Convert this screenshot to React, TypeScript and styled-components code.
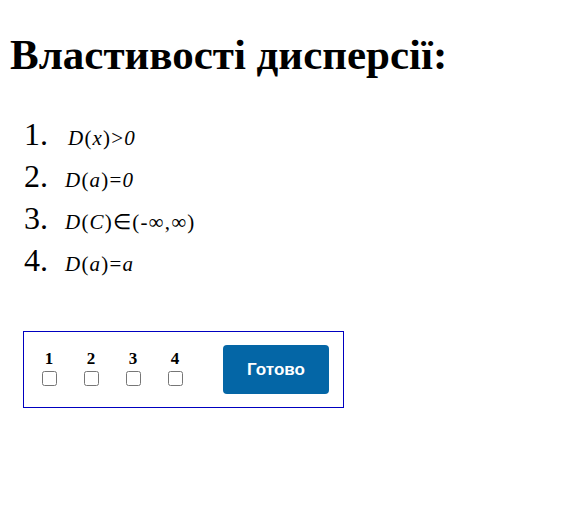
import React from "react";
import styled, { createGlobalStyle } from "styled-components";

const Global = createGlobalStyle`
  html, body { margin: 0; padding: 0; background: #fff; }
  body { font-family: "Liberation Serif", "Times New Roman", serif; color: #000; }
`;

const Page = styled.div`
  padding: 8px 0 0 10px;
`;

const Title = styled.h1`
  margin: 24px 0 0 0;
  font-size: 43px;
  font-weight: bold;
  line-height: 46px;
`;

const List = styled.ol`
  margin: 38px 0 0 0;
  padding: 0 0 0 14px;
  list-style: none;
  display: flex;
  flex-direction: column;
`;

const Item = styled.li`
  display: flex;
  align-items: baseline;
  height: 42px;
`;

const Num = styled.span`
  font-size: 32px;
  width: 41px;
`;

const Formula = styled.span<{ $shift?: number }>`
  font-size: 21px;
  letter-spacing: 1.2px;
  padding-left: ${(p) => p.$shift ?? 0}px;
`;

const I = styled.i`
  font-style: italic;
`;

const Box = styled.div`
  margin: 47px 0 0 13px;
  width: 321px;
  height: 77px;
  box-sizing: border-box;
  border: 1px solid #0000c0;
  display: flex;
  align-items: center;
  padding: 0 0 0 4px;
`;

const Choices = styled.div`
  display: flex;
  padding-bottom: 4px;
`;

const Choice = styled.label`
  width: 42px;
  display: flex;
  flex-direction: column;
  align-items: center;
  font-weight: bold;
  font-size: 17px;
  line-height: 18px;
  gap: 3px;
`;

const Check = styled.input`
  margin: 0;
  width: 15px;
  height: 15px;
`;

const Button = styled.button`
  margin-left: 27px;
  width: 106px;
  height: 49px;
  border: none;
  border-radius: 4px;
  background: #0466a6;
  color: #fff;
  font-family: "Liberation Sans", Arial, sans-serif;
  font-weight: bold;
  font-size: 17px;
`;

export default function App() {
  return (
    <>
      <Global />
      <Page>
        <Title>Властивості дисперсії:</Title>
        <List>
          <Item>
            <Num>1.</Num>
            <Formula $shift={3}>
              <I>D</I>(<I>x</I>)&gt;<I>0</I>
            </Formula>
          </Item>
          <Item>
            <Num>2.</Num>
            <Formula>
              <I>D</I>(<I>a</I>)=<I>0</I>
            </Formula>
          </Item>
          <Item>
            <Num>3.</Num>
            <Formula>
              <I>D</I>(<I>C</I>)∈(-∞,∞)
            </Formula>
          </Item>
          <Item>
            <Num>4.</Num>
            <Formula>
              <I>D</I>(<I>a</I>)=<I>a</I>
            </Formula>
          </Item>
        </List>
        <Box>
          <Choices>
            {[1, 2, 3, 4].map((n) => (
              <Choice key={n}>
                {n}
                <Check type="checkbox" />
              </Choice>
            ))}
          </Choices>
          <Button>Готово</Button>
        </Box>
      </Page>
    </>
  );
}
